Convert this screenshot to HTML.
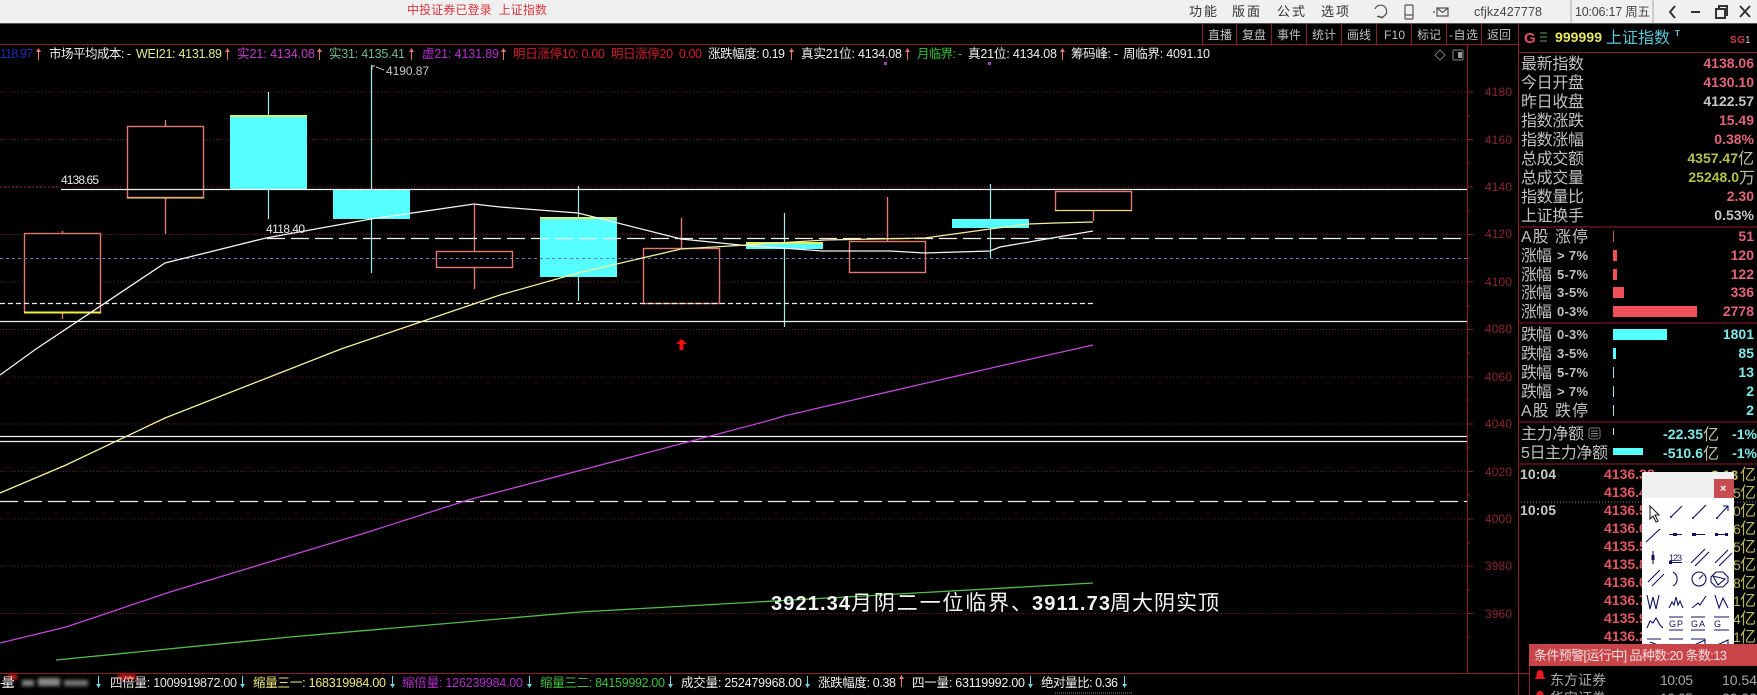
<!DOCTYPE html>
<html lang="zh"><head><meta charset="utf-8"><title>上证指数</title>
<style>
html,body{margin:0;padding:0;background:#000;width:1757px;height:695px;overflow:hidden}
svg{display:block}
text{font-family:"Liberation Sans","WenQuanYi Zen Hei","Noto Sans CJK SC",sans-serif;white-space:pre}
.h{font-size:12.500px}
.ax{font-size:12px;fill:#8a2630}
.t{font-size:12px;fill:#c0c0c0}
.l{font-size:16px;fill:#c0c0c0}
.v{font-size:14px;font-weight:bold;text-anchor:end}
.s{font-size:13px;font-weight:bold;fill:#c0c0c0}
.r{fill:#e2647a}.w{fill:#c4c4c4}.y{fill:#b8c048}.c{fill:#80e8e8}
.p{fill:none;stroke:#101060;stroke-width:1.100}
.g{stroke:#701c24;stroke-width:1;stroke-dasharray:1 2}
</style></head><body>
<svg width="1757" height="695" viewBox="0 0 1757 695" xmlns="http://www.w3.org/2000/svg">
<defs><filter id="b" x="-20%" y="-50%" width="140%" height="200%"><feGaussianBlur stdDeviation="1.800"/></filter></defs>
<rect width="1757" height="695" fill="#000"/>
<!-- top bar -->
<rect width="1757" height="23" fill="#f0f0f0"/><rect y="23" width="1757" height="1" fill="#555"/>
<text x="407" y="14" font-size="12" fill="#d8343c" textLength="140">中投证券已登录  上证指数</text>
<g font-size="13" fill="#333"><text x="1189" y="16" textLength="28">功能</text><text x="1232" y="16" textLength="28">版面</text><text x="1277" y="16" textLength="28">公式</text><text x="1321" y="16" textLength="28">选项</text></g>
<g fill="none" stroke="#555" stroke-width="1.200">
<path d="M1375 9 a6 6 0 1 1 2 7 M1379 16 l3 2 l5-5"/>
<rect x="1405" y="5" width="8" height="14" rx="1"/><path d="M1405 15h8"/>
<path d="M1437 8h11v8h-11zM1437 8l5.500 4.500 5.500-4.500M1435 12h-2"/>
</g>
<text x="1474" y="16" font-size="12.500" fill="#444" textLength="68">cfjkz427778</text>
<path d="M1571 0v23M1653 0v23" stroke="#aaa"/>
<text x="1575" y="16" font-size="12.500" fill="#444" textLength="75">10:06:17 周五</text>
<g fill="none" stroke="#333" stroke-width="2">
<path d="M1675 6l-5 6 5 6"/><path d="M1691 12h9"/><path d="M1716 9h9v9h-9zM1719 9V6h8v9h-2"/><path d="M1740 6l10 11M1750 6l-10 11"/>
</g>
<!-- toolbar -->
<path d="M0 44.500H1518M1202.500 24v20M1236.500 24v20M1271.500 24v20M1306.500 24v20M1341.500 24v20M1376.500 24v20M1411.500 24v20M1446.500 24v20M1481.500 24v20" stroke="#8a1c28"/>
<g class="t">
<text class="t" x="1208" y="39" textLength="24">直播</text><text class="t" x="1242" y="39" textLength="24">复盘</text><text class="t" x="1277" y="39" textLength="24">事件</text><text class="t" x="1312" y="39" textLength="24">统计</text><text class="t" x="1347" y="39" textLength="24">画线</text><text class="t" x="1384" y="39" textLength="21">F10</text><text class="t" x="1417" y="39" textLength="24">标记</text><text class="t" x="1449" y="39" textLength="29">-自选</text><text class="t" x="1487" y="39" textLength="24">返回</text>
</g>
<!-- grid -->
<g class="g">
<path d="M0 92H1467M0 139.500H1467M0 187H1467M0 234.500H1467M0 282H1467M0 329.500H1467M0 377H1467M0 424H1467M0 471.500H1467M0 519H1467M0 566H1467M0 613.500H1467"/>
</g>
<path d="M0 187H61" stroke="#8a3060" stroke-dasharray="2 2"/>
<!-- axis -->
<path d="M1467.500 44V673" stroke="#8a1c28"/>
<path d="M1467 92h6M1467 116h3M1467 139.500h6M1467 163h3M1467 187h6M1467 211h3M1467 234.500h6M1467 258h3M1467 282h6M1467 306h3M1467 329.500h6M1467 353h3M1467 377h6M1467 400h3M1467 424h6M1467 448h3M1467 471.500h6M1467 495h3M1467 519h6M1467 543h3M1467 566h6M1467 590h3M1467 613.500h6M1467 637h3" stroke="#8a1c28"/>
<g class="ax"><text class="ax" x="1485" y="96" textLength="27">4180</text><text class="ax" x="1485" y="144" textLength="27">4160</text><text class="ax" x="1485" y="191" textLength="27">4140</text><text class="ax" x="1485" y="238" textLength="27">4120</text><text class="ax" x="1485" y="286" textLength="27">4100</text><text class="ax" x="1485" y="333" textLength="27">4080</text><text class="ax" x="1485" y="381" textLength="27">4060</text><text class="ax" x="1485" y="428" textLength="27">4040</text><text class="ax" x="1485" y="476" textLength="27">4020</text><text class="ax" x="1485" y="523" textLength="27">4000</text><text class="ax" x="1485" y="570" textLength="27">3980</text><text class="ax" x="1485" y="618" textLength="27">3960</text></g>
<!-- wicks -->
<g stroke="#e07a70" stroke-width="1.400">
<path d="M62.500 231v88M165.500 120v114M474.500 205v84M681.500 218v30M887.500 197v44M1093.500 210v11"/>
</g>
<g stroke="#a8eaea" stroke-width="1.200">
<path d="M268.500 92v127M371.500 65v208M578.500 186v115M784.500 213v114M990.500 184v74"/>
</g>
<!-- candles -->
<g fill="#000" stroke="#e07a70" stroke-width="1.400">
<rect x="24.500" y="233.500" width="76" height="79"/><rect x="127.500" y="126.500" width="76" height="71"/><rect x="436.500" y="251.500" width="76" height="16"/><rect x="643.500" y="248.500" width="76" height="55"/><rect x="849.500" y="241.500" width="76" height="31"/><rect x="1055.500" y="191.500" width="76" height="19"/>
</g>
<path d="M24 312.500h77" stroke="#f0f040" stroke-width="2"/><path d="M127 198h77M1055 210.500h77" stroke="#e8e080" stroke-width="1"/>
<g fill="#55ffff"><rect x="230" y="115" width="77" height="74"/><rect x="333" y="189" width="77" height="30"/><rect x="540" y="217" width="77" height="60"/><rect x="746" y="242" width="77" height="7"/><rect x="952" y="219" width="77" height="9"/></g>
<path d="M230 116h77M540 218h77M746 243h77" stroke="#d8f060" stroke-width="2"/>
<!-- horizontal lines -->
<g stroke="#f0f0f0" stroke-width="1.200" fill="none">
<path d="M61 189.500H1467M0 321.500H1467M0 436.500H1467M0 441.500H1467"/>
<path d="M267 238.500H1461" stroke-dasharray="18 6"/>
<path d="M0 303.500H1093" stroke-dasharray="5 3"/>
<path d="M0 501.500H1467" stroke-dasharray="18 6"/>
</g>
<path d="M0 258.500H1467" stroke="#6a78b0" stroke-dasharray="3 3"/>
<!-- curves -->
<g fill="none" stroke-width="1.300">
<polyline stroke="#f4f4f4" points="0,375 36,349 165,263 266,238 371,219 474,204 500,207 578,213 681,239 740,245 823,251 890,251 925,253 990,251 1000,247 1093,231"/>
<polyline stroke="#f4f0a0" points="0,493 66,465 165,418 341,349 500,295 578,273 681,249 746,245 825,240 925,238 990,229 1029,224 1055,223 1093,222"/>
<polyline stroke="#c048d8" points="0,643 66,627 170,592 365,533 468,500 771,420 784,416 1000,366 1093,345"/>
<polyline stroke="#50c048" points="56,660 290,637 580,612 1093,583"/>
</g>
<!-- marks -->
<path d="M681.500 339l-5.500 5h3.500v6h4v-6h3.500z" fill="#f01010"/>
<path d="M372 66l3 0M372 66v4M376 67l8 3" stroke="#c8c8c8" fill="none"/>
<text x="386" y="75" font-size="12" fill="#c8c8c8" textLength="43">4190.87</text>
<text x="61" y="184" font-size="12" fill="#e8e8e8" textLength="38">4138.65</text>
<text x="266" y="233" font-size="12" fill="#e8e8e8" textLength="39">4118.40</text>
<rect x="884" y="62" width="3" height="3" fill="#a040c0"/><rect x="988" y="62" width="3" height="3" fill="#a040c0"/>
<path d="M1440 50l5 5-5 5-5-5z" fill="none" stroke="#777"/><rect x="1453" y="50" width="10" height="10" rx="1" fill="none" stroke="#888"/><rect x="1458" y="52" width="4" height="6" fill="#999"/>
<!-- big annotation -->
<g fill="#f4f4f4" font-size="21">
<text x="771" y="610" font-size="20" font-weight="bold" textLength="79">3921.34</text>
<text x="851" y="610" textLength="181">月阴二一位临界、</text>
<text x="1032" y="610" font-size="20" font-weight="bold" textLength="78">3911.73</text>
<text x="1110" y="610" textLength="109">周大阴实顶</text>
</g>
<!-- header legend -->
<g class="h">
<text class="h" x="0" y="58" fill="#1c2cb0" textLength="33">118.97</text>
<text class="h" x="49" y="58" fill="#f0f0f0" textLength="82">市场平均成本: -</text>
<text class="h" x="136" y="58" fill="#e8e890" textLength="86">WEI21: 4131.89</text>
<text class="h" x="237" y="58" fill="#c040c8" textLength="78">实21: 4134.08</text>
<text class="h" x="329" y="58" fill="#70b890" textLength="76">实31: 4135.41</text>
<text class="h" x="422" y="58" fill="#b830d0" textLength="77">虚21: 4131.89</text>
<text class="h" x="513" y="58" fill="#d02028" textLength="92">明日涨停10: 0.00</text>
<text class="h" x="611" y="58" fill="#d02028" textLength="91">明日涨停20  0.00</text>
<text class="h" x="708" y="58" fill="#f0f0f0" textLength="77">涨跌幅度: 0.19</text>
<text class="h" x="801" y="58" fill="#f0f0f0" textLength="101">真实21位: 4134.08</text>
<text class="h" x="917" y="58" fill="#30c030" textLength="45">月临界: -</text>
<text class="h" x="968" y="58" fill="#f0f0f0" textLength="89">真21位: 4134.08</text>
<text class="h" x="1071" y="58" fill="#f0f0f0" textLength="47">筹码峰: -</text>
<text class="h" x="1123" y="58" fill="#f0f0f0" textLength="87">周临界: 4091.10</text>
</g>
<g stroke="#e87870" fill="#e87870"><path d="M38.500 60v-11M227.500 60v-11M319.500 60v-11M411.500 60v-11M503.500 60v-11M791.500 60v-11M907.500 60v-11M1062.500 60v-11" stroke-width="1"/>
<path d="M36 52l2.500-4 2.500 4zM225 52l2.500-4 2.500 4zM317 52l2.500-4 2.500 4zM409 52l2.500-4 2.500 4zM501 52l2.500-4 2.500 4zM789 52l2.500-4 2.500 4zM905 52l2.500-4 2.500 4zM1060 52l2.500-4 2.500 4z" stroke="none"/></g>
<!-- bottom legend -->
<path d="M0 673.500H1518" stroke="#901c28"/>
<g filter="url(#b)"><rect x="22" y="680" width="12" height="6" fill="#888"/><rect x="38" y="678" width="22" height="8" fill="#8a8a8a"/><rect x="64" y="680" width="24" height="6" fill="#777"/><rect x="8" y="674" width="9" height="6" fill="#c02020"/><rect x="118" y="674" width="18" height="6" fill="#c81818"/></g>
<g class="h">
<text class="h" x="0" y="687" fill="#f0f0f0" textLength="15">-量:</text>
<text class="h" x="110" y="687" fill="#e8e8e8" textLength="127">四倍量: 1009919872.00</text>
<text class="h" x="253" y="687" fill="#f0e880" textLength="133">缩量三一: 168319984.00</text>
<text class="h" x="402" y="687" fill="#b030c8" textLength="121">缩倍量: 126239984.00</text>
<text class="h" x="540" y="687" fill="#40c040" textLength="125">缩量三二: 84159992.00</text>
<text class="h" x="681" y="687" fill="#f0f0f0" textLength="121">成交量: 252479968.00</text>
<text class="h" x="818" y="687" fill="#f0f0f0" textLength="78">涨跌幅度: 0.38</text>
<text class="h" x="912" y="687" fill="#f0f0f0" textLength="113">四一量: 63119992.00</text>
<text class="h" x="1041" y="687" fill="#f0f0f0" textLength="77">绝对量比: 0.36</text>
</g>
<g stroke="#70d8e0" fill="#70d8e0"><path d="M98.500 676v11M242.500 676v11M392.500 676v11M529.500 676v11M670.500 676v11M807.500 676v11M1030.500 676v11M1124.500 676v11"/>
<path d="M96 684l2.500 4 2.500-4zM240 684l2.500 4 2.500-4zM390 684l2.500 4 2.500-4zM527 684l2.500 4 2.500-4zM668 684l2.500 4 2.500-4zM805 684l2.500 4 2.500-4zM1028 684l2.500 4 2.500-4zM1122 684l2.500 4 2.500-4z" stroke="none"/></g>
<path d="M901.500 676v11" stroke="#e87870"/><path d="M899 679l2.500-4 2.500 4z" fill="#e87870"/>
<path d="M1055 693h77" stroke="#888" stroke-dasharray="1 1"/>
<!-- right panel -->
<path d="M1518.500 24V695M1518 52.500H1757M1518 227H1757M1518 323H1757M1518 422H1757M1518 464H1757" stroke="#901c28"/>
<text x="1524" y="43" font-size="15" font-weight="bold" fill="#e05060">G</text>
<path d="M1540 33h7M1540 37h7M1540 41h7" stroke="#60a070"/>
<text x="1555" y="42" font-size="14" font-weight="bold" fill="#e8e860" textLength="47">999999</text>
<text x="1606" y="43" font-size="16" fill="#58c8d8" textLength="64">上证指数</text>
<text x="1675" y="36" font-size="8" font-weight="bold" fill="#70c8d8">T</text>
<text x="1730" y="43" font-size="10" font-weight="bold" fill="#d04050" textLength="15">SG</text><text x="1745" y="43" font-size="10" fill="#c8c8c8">1</text>
<!-- stats -->
<g class="l">
<text class="l" x="1521" y="69" textLength="63">最新指数</text><text class="l" x="1521" y="88" textLength="63">今日开盘</text><text class="l" x="1521" y="107" textLength="63">昨日收盘</text><text class="l" x="1521" y="126" textLength="63">指数涨跌</text><text class="l" x="1521" y="145" textLength="63">指数涨幅</text><text class="l" x="1521" y="164" textLength="63">总成交额</text><text class="l" x="1521" y="183" textLength="63">总成交量</text><text class="l" x="1521" y="202" textLength="63">指数量比</text><text class="l" x="1521" y="221" textLength="63">上证换手</text>
</g>
<text class="v r" x="1754" y="68">4138.06</text><text class="v r" x="1754" y="87">4130.10</text><text class="v w" x="1754" y="106">4122.57</text><text class="v r" x="1754" y="125">15.49</text><text class="v r" x="1754" y="144">0.38%</text>
<text class="v y" x="1738" y="163">4357.47</text><text x="1738" y="164" font-size="16" fill="#c0c0a0">亿</text>
<text class="v y" x="1739" y="182">25248.0</text><text x="1739" y="183" font-size="16" fill="#c0c0a0">万</text>
<text class="v r" x="1754" y="201">2.30</text><text class="v w" x="1754" y="220">0.53%</text>
<!-- up/down -->
<g class="l">
<text class="l" x="1521" y="242" textLength="67">A股 涨停</text><text class="l" x="1521" y="261" textLength="31">涨幅</text><text class="l" x="1521" y="280" textLength="31">涨幅</text><text class="l" x="1521" y="298" textLength="31">涨幅</text><text class="l" x="1521" y="317" textLength="31">涨幅</text>
<text class="l" x="1521" y="340" textLength="31">跌幅</text><text class="l" x="1521" y="359" textLength="31">跌幅</text><text class="l" x="1521" y="378" textLength="31">跌幅</text><text class="l" x="1521" y="397" textLength="31">跌幅</text><text class="l" x="1521" y="416" textLength="67">A股 跌停</text>
<text class="l" x="1521" y="439" textLength="63">主力净额</text><text class="l" x="1521" y="458" textLength="87">5日主力净额</text>
</g>
<g class="s"><text class="s" x="1557" y="260" textLength="31">&gt; 7%</text><text class="s" x="1557" y="279" textLength="31">5-7%</text><text class="s" x="1557" y="297" textLength="31">3-5%</text><text class="s" x="1557" y="316" textLength="31">0-3%</text><text class="s" x="1557" y="339" textLength="31">0-3%</text><text class="s" x="1557" y="358" textLength="31">3-5%</text><text class="s" x="1557" y="377" textLength="31">5-7%</text><text class="s" x="1557" y="396" textLength="31">&gt; 7%</text></g>
<g fill="#f05058"><rect x="1613" y="231" width="1" height="11" fill="#c06060"/><rect x="1613" y="250" width="4" height="11"/><rect x="1613" y="269" width="4" height="11"/><rect x="1613" y="287" width="11" height="11"/><rect x="1613" y="306" width="84" height="11"/></g>
<g fill="#55ffff"><rect x="1613" y="329" width="54" height="11"/><rect x="1613" y="348" width="3" height="11"/><rect x="1613" y="367" width="1" height="11" fill="#a0e0e0"/><rect x="1613" y="386" width="1" height="11" fill="#a0e0e0"/><rect x="1613" y="405" width="1" height="11" fill="#a0e0e0"/><rect x="1613" y="428" width="1" height="7" fill="#a0e0e0"/><rect x="1613" y="448" width="30" height="7"/></g>
<text class="v r" x="1754" y="241">51</text><text class="v r" x="1754" y="260">120</text><text class="v r" x="1754" y="279">122</text><text class="v r" x="1754" y="297">336</text><text class="v r" x="1754" y="316">2778</text>
<text class="v c" x="1754" y="339">1801</text><text class="v c" x="1754" y="358">85</text><text class="v c" x="1754" y="377">13</text><text class="v c" x="1754" y="396">2</text><text class="v c" x="1754" y="415">2</text>
<rect x="1589" y="428" width="11" height="11" rx="2" fill="none" stroke="#777"/><path d="M1591 431h7M1591 433.500h7M1591 436h7" stroke="#888"/>
<text x="1663" y="439" font-size="14" font-weight="bold" fill="#80e8e8" textLength="40">-22.35</text><text x="1703" y="440" font-size="16" fill="#c0c0a0">亿</text>
<text x="1663" y="458" font-size="14" font-weight="bold" fill="#80e8e8" textLength="40">-510.6</text><text x="1703" y="459" font-size="16" fill="#c0c0a0">亿</text>
<text x="1757" y="439" font-size="14" font-weight="bold" fill="#80e8e8" text-anchor="end">-1%</text><text x="1757" y="458" font-size="14" font-weight="bold" fill="#80e8e8" text-anchor="end">-1%</text>
<!-- time & sales -->
<text x="1520" y="479" font-size="14" font-weight="bold" fill="#c8c8c8" textLength="36">10:04</text><text x="1520" y="515" font-size="14" font-weight="bold" fill="#c8c8c8" textLength="36">10:05</text>
<path d="M1521 502H1757" stroke="#888" stroke-dasharray="1 2"/>
<g font-size="14" font-weight="bold" fill="#e05860">
<text x="1604" y="479">4136.38</text><text x="1604" y="497">4136.47</text><text x="1604" y="515">4136.50</text><text x="1604" y="533">4136.60</text><text x="1604" y="551">4135.50</text><text x="1604" y="569">4135.80</text><text x="1604" y="587">4136.00</text><text x="1604" y="605">4136.70</text><text x="1604" y="623">4135.90</text><text x="1604" y="641">4136.20</text>
</g>
<g font-size="16" fill="#b8b860">
<text x="1711" y="480" font-size="14" font-weight="bold">2.13</text><text x="1740" y="480">亿</text><text x="1733" y="498" font-size="14">5</text><text x="1740" y="498">亿</text><text x="1733" y="516" font-size="14">0</text><text x="1740" y="516">亿</text><text x="1733" y="534" font-size="14">6</text><text x="1740" y="534">亿</text><text x="1733" y="552" font-size="14">5</text><text x="1740" y="552">亿</text><text x="1733" y="570" font-size="14">5</text><text x="1740" y="570">亿</text><text x="1733" y="588" font-size="14">8</text><text x="1740" y="588">亿</text><text x="1733" y="606" font-size="14">1</text><text x="1740" y="606">亿</text><text x="1733" y="624" font-size="14">4</text><text x="1740" y="624">亿</text><text x="1733" y="642" font-size="14">1</text><text x="1740" y="642">亿</text>
</g>
<!-- drawing palette -->
<rect x="1642" y="472" width="92" height="175" rx="2" fill="#fff"/>
<path d="M1642 498V474a2 2 0 0 1 2-2h88a2 2 0 0 1 2 2v24z" fill="#f0f0f0"/>
<rect x="1714" y="479" width="20" height="19" fill="#c84c50"/>
<text x="1720" y="492" font-size="11" font-weight="bold" fill="#fff">×</text>
<g class="p">
<path d="M1650 506v13l3-3 3 6 2-1-3-6h4z" stroke="#222"/>
<path d="M1671 517l11-11M1693 518l13-13M1717 518l11-12M1723 506h5v5"/>
<path d="M1646 542l14-13M1669 534.500h13M1692 534.500h13M1715 534.500h13"/>
<path d="M1653 551v13M1669 562.500h13M1691 563l14-14M1695 566l14-14M1715 563l13-13M1719 566l13-13M1648 582l12-12M1652 586l12-12"/>
<path d="M1673 572a8 8 0 0 1 0 14"/><circle cx="1699" cy="579" r="7"/><path d="M1699 579l4-4"/><path d="M1716 572h7l5 5v5l-5 5h-7l-5-5v-5zM1713 576l12 3-7 6z"/>
<path d="M1647 595l3 14 3-12 3 12 3-14M1669 608l3-6 2 3 2-8 2 8 2-4 3 7M1692 608l6-5 2 2 6-9M1715 595l4 13 4-10 5 10"/>
<path d="M1647 628l3-7 3 2 3-5 4 7 3 3M1669 617h14M1669 630h14M1691 617h14M1691 630h14M1714 617h15M1714 630h15"/>
<path d="M1669 639h14M1691 639h14M1692 646l13-6v6M1715 646l13-6v6M1647 639h14M1650 642l8 3"/>
</g>
<g fill="#101060">
<circle cx="1671" cy="517" r="1"/><circle cx="1693" cy="518" r="1"/><circle cx="1717" cy="518" r="1"/>
<rect x="1673" y="533" width="4" height="3"/><rect x="1692" y="533" width="4" height="3"/><rect x="1715" y="533" width="3" height="3"/><rect x="1725" y="533" width="3" height="3"/><rect x="1651.500" y="555" width="3" height="5"/><rect x="1669" y="561" width="3" height="3"/>
</g>
<g font-size="9" fill="#101060"><text x="1669" y="561" textLength="13">123</text><text x="1669" y="627" textLength="14">GP</text><text x="1691" y="627" textLength="14">GA</text><text x="1714" y="627">G</text></g>
<!-- alert panel -->
<rect x="1529" y="644" width="228" height="51" fill="#000"/>
<rect x="1529" y="644" width="228" height="22" fill="#c84448"/>
<path d="M1518 673.500H1529M1529.500 666V695" stroke="#901c28"/>
<text x="1534" y="660" font-size="13" fill="#f0e0e0" textLength="193">条件预警[运行中] 品种数:20 条数:13</text>
<path d="M1540 670c-3 0-3.500 3-3.500 5s-1.500 3-1.500 4h10c0-1-1.500-2-1.500-4s-.5-5-3.500-5z" fill="#e81820"/><path d="M1540 691c-3 0-3.500 2-3.500 4h7c0-2-.5-4-3.500-4z" fill="#e81820"/>
<text x="1550" y="685" font-size="14" fill="#a8a8a8" textLength="56">东方证券</text>
<text x="1660" y="685" font-size="14" fill="#a8a8a8" textLength="33">10:05</text>
<text x="1722" y="685" font-size="14" fill="#a8a8a8" textLength="35">10.54</text>
<text x="1550" y="703" font-size="14" fill="#a8a8a8" textLength="56">华安证券</text>
<text x="1660" y="703" font-size="14" fill="#a8a8a8" textLength="33">10:05</text>
<text x="1722" y="703" font-size="14" fill="#a8a8a8" textLength="35">20.32</text>
</svg>
</body></html>
